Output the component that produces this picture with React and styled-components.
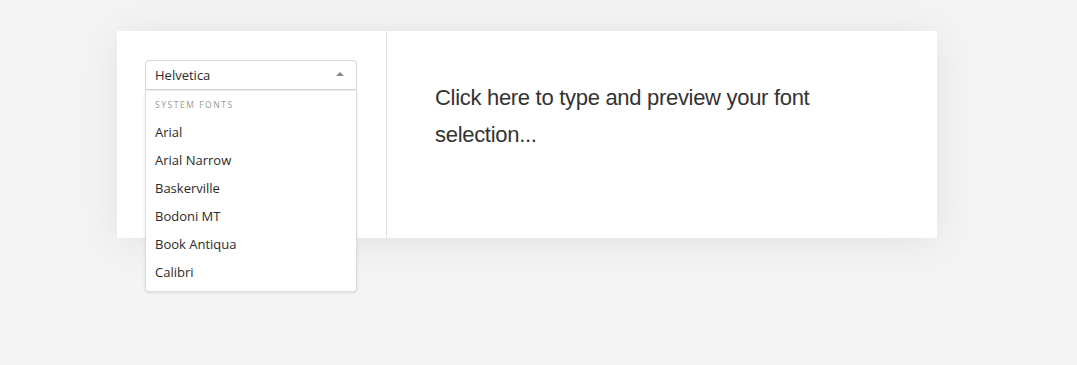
import React from "react";
import styled, { createGlobalStyle } from "styled-components";

const Global = createGlobalStyle`
  html, body {
    margin: 0;
    padding: 0;
    background: #f4f4f4;
  }
  body {
    font-family: "Open Sans", "Liberation Sans", sans-serif;
  }
`

const Page = styled.div`
  padding: 31px 0 0 117px;
  height: 334px;
`

const Card = styled.div`
  width: 820px;
  height: 207px;
  background: #fff;
  display: flex;
  box-shadow: 0 4px 40px rgba(0, 0, 0, 0.08);
`

const Sidebar = styled.div`
  flex-shrink: 0;
  width: 241px;
  padding: 29px 0 0 28px;
  border-right: 1px solid #e4e4e4;
`

const SelectWrap = styled.div`
  position: relative;
  width: 212px;
`

const Control = styled.div`
  box-sizing: border-box;
  height: 30px;
  display: flex;
  align-items: center;
  padding: 0 9px;
  border: 1px solid #d6d6d6;
  border-radius: 4px 4px 0 0;
  background: #fff;
  box-shadow: 0 1px 2px rgba(0, 0, 0, 0.06);
  font-size: 13px;
  color: #2b2b2b;
`

const Value = styled.span`
  flex-grow: 1;
`

const Arrow = styled.span`
  width: 0;
  height: 0;
  margin-right: 3px;
  margin-bottom: 2px;
  border-left: 4px solid transparent;
  border-right: 4px solid transparent;
  border-bottom: 4px solid #888;
`

const Menu = styled.div`
  position: absolute;
  top: 30px;
  left: 0;
  right: 0;
  z-index: 2;
  box-sizing: border-box;
  background: #fff;
  border: 1px solid #dcdcdc;
  border-top: 1px solid #ececec;
  border-radius: 0 0 4px 4px;
  box-shadow: 0 1px 3px rgba(0, 0, 0, 0.1);
  padding: 7px 0 5px;
`

const GroupHeading = styled.div`
  height: 13px;
  line-height: 13px;
  padding: 0 9px 7px;
  font-size: 8.5px;
  letter-spacing: 1.55px;
  text-transform: uppercase;
  color: #999;
`

const Option = styled.div`
  height: 28px;
  line-height: 28px;
  padding: 0 9px;
  font-size: 13px;
  color: #2b2b2b;
`

const Preview = styled.div`
  flex-grow: 1;
  padding: 48px 48px 0 48px;
  font-family: "Liberation Sans", Arial, sans-serif;
  font-size: 22px;
  letter-spacing: -0.3px;
  line-height: 37px;
  color: #333;
`

const fonts = ["Arial", "Arial Narrow", "Baskerville", "Bodoni MT", "Book Antiqua", "Calibri"]

export default function App() {
  return <>
    <Global />
    <Page>
      <Card>
        <Sidebar>
          <SelectWrap>
            <Control>
              <Value>Helvetica</Value>
              <Arrow />
            </Control>
            <Menu>
              <GroupHeading>System fonts</GroupHeading>
              {fonts.map((f) => <Option key={f}>{f}</Option>)}
            </Menu>
          </SelectWrap>
        </Sidebar>
        <Preview>Click here to type and preview your font selection...</Preview>
      </Card>
    </Page>
  </>
}
